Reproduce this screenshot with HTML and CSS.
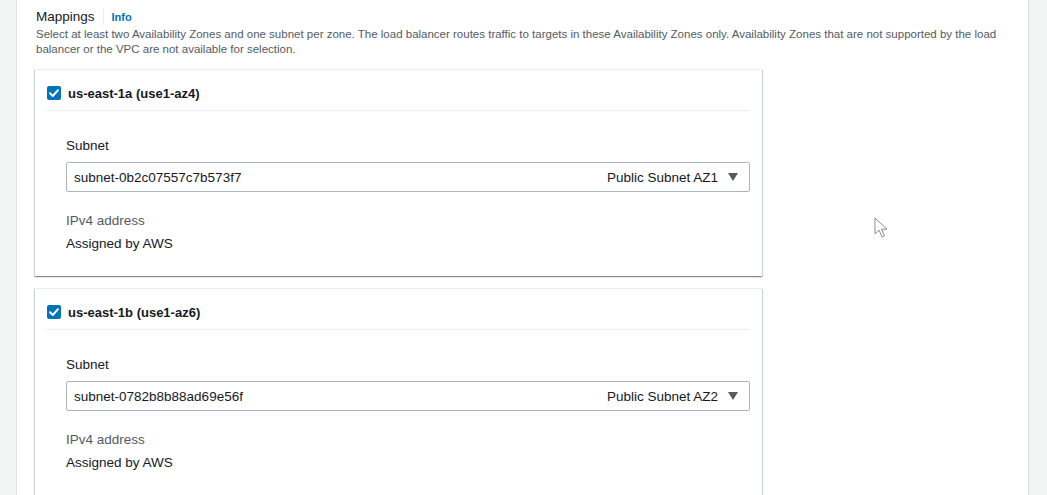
FILE: index.html
```html
<!DOCTYPE html>
<html>
<head>
<meta charset="utf-8">
<link rel="stylesheet" href="styles.css">
</head>
<body>
<div class="panel">
  <div class="title-row">
    <span class="title">Mappings</span>
    <span class="sep"></span>
    <a class="info">Info</a>
  </div>
  <p class="desc">Select at least two Availability Zones and one subnet per zone. The load balancer routes traffic to targets in these Availability Zones only. Availability Zones that are not supported by the load balancer or the VPC are not available for selection.</p>

  <div class="cards">
    <div class="card">
      <div class="card-head">
        <span class="check"><svg viewBox="0 0 14 14" width="14" height="14"><path d="M3 7.2 L5.8 10 L11 4.2" fill="none" stroke="#fff" stroke-width="2" stroke-linecap="round" stroke-linejoin="round"/></svg></span>
        <span class="zone">us-east-1a (use1-az4)</span>
      </div>
      <div class="card-body">
        <div class="label">Subnet</div>
        <div class="select">
          <span class="sel-val">subnet-0b2c07557c7b573f7</span>
          <span class="sel-tag">Public Subnet AZ1</span>
          <svg class="caret" viewBox="0 0 10 8" width="10" height="8"><path d="M0 0 H10 L5 8 Z" fill="#545b64"/></svg>
        </div>
        <div class="label muted ip">IPv4 address</div>
        <div class="value">Assigned by AWS</div>
      </div>
    </div>

    <div class="card">
      <div class="card-head">
        <span class="check"><svg viewBox="0 0 14 14" width="14" height="14"><path d="M3 7.2 L5.8 10 L11 4.2" fill="none" stroke="#fff" stroke-width="2" stroke-linecap="round" stroke-linejoin="round"/></svg></span>
        <span class="zone">us-east-1b (use1-az6)</span>
      </div>
      <div class="card-body">
        <div class="label">Subnet</div>
        <div class="select">
          <span class="sel-val">subnet-0782b8b88ad69e56f</span>
          <span class="sel-tag">Public Subnet AZ2</span>
          <svg class="caret" viewBox="0 0 10 8" width="10" height="8"><path d="M0 0 H10 L5 8 Z" fill="#545b64"/></svg>
        </div>
        <div class="label muted ip">IPv4 address</div>
        <div class="value">Assigned by AWS</div>
      </div>
    </div>
  </div>
</div>
<svg class="cursor" viewBox="0 0 16 22" width="16" height="22"><path d="M1 1 L1 17 L5 13 L8 20 L10.5 19 L7.6 12.2 L13 12.2 Z" fill="#fff" stroke="#8a8f94" stroke-width="1" stroke-linejoin="round"/></svg>
</body>
</html>
```
FILE: styles.css
```css
html, body {
  margin: 0;
  padding: 0;
}
body {
  background: #f2f3f3;
  font-family: "Liberation Sans", Arial, sans-serif;
  color: #16191f;
  height: 495px;
  overflow: hidden;
  position: relative;
}
.panel {
  margin-left: 16px;
  width: 1013px;
  min-height: 495px;
  background: #fff;
  border-left: 1px solid #dfe2e2;
  border-right: 1px solid #dfe2e2;
  padding: 7px 19px 0 19px;
  box-sizing: border-box;
}
.title-row {
  display: flex;
  align-items: center;
  height: 20px;
}
.title {
  font-size: 13.5px;
  line-height: 20px;
  color: #16191f;
}
.sep {
  width: 1px;
  height: 16px;
  background: #eaeded;
  margin: 0 8px 0 8px;
}
.info {
  font-size: 11px;
  font-weight: bold;
  color: #0073bb;
  line-height: 20px;
}
.desc {
  margin: 0;
  font-size: 11.5px;
  line-height: 15px;
  color: #545b64;
  max-width: 975px;
}
.cards {
  margin-top: 12px;
  margin-left: -1px;
  display: flex;
  flex-direction: column;
  gap: 12px;
  width: 727px;
}
.card {
  background: #fff;
  border-top: 1px solid #eaeded;
  box-shadow: 0 1px 1px 0 rgba(0, 28, 36, 0.3), 1px 1px 1px 0 rgba(0, 28, 36, 0.15), -1px 1px 1px 0 rgba(0, 28, 36, 0.15);
  padding: 0 12px;
}
.card-head {
  display: flex;
  align-items: center;
  height: 41px;
  padding-top: 6px;
  box-sizing: border-box;
  border-bottom: 1px solid #eaeded;
}
.check {
  width: 14px;
  height: 14px;
  background: #0073bb;
  border-radius: 2px;
  display: flex;
  margin-right: 7px;
}
.zone {
  font-size: 13px;
  font-weight: bold;
  color: #16191f;
}
.card-body {
  padding: 25px 0 22px 19px;
}
.label {
  font-size: 13.5px;
  line-height: 20px;
  color: #16191f;
}
.muted {
  color: #545b64;
}
.ip {
  margin-top: 19px;
}
.select {
  margin-top: 6px;
  height: 30px;
  box-sizing: border-box;
  border: 1px solid #aab7b8;
  border-radius: 2px;
  display: flex;
  align-items: center;
  padding: 0 11px 0 7px;
  font-size: 13.5px;
}
.sel-val {
  flex: 1;
  color: #16191f;
}
.sel-tag {
  color: #16191f;
  margin-right: 10px;
}
.value {
  margin-top: 3px;
  font-size: 13.5px;
  line-height: 20px;
  color: #16191f;
}
.cursor {
  position: absolute;
  left: 874px;
  top: 217px;
}
```
